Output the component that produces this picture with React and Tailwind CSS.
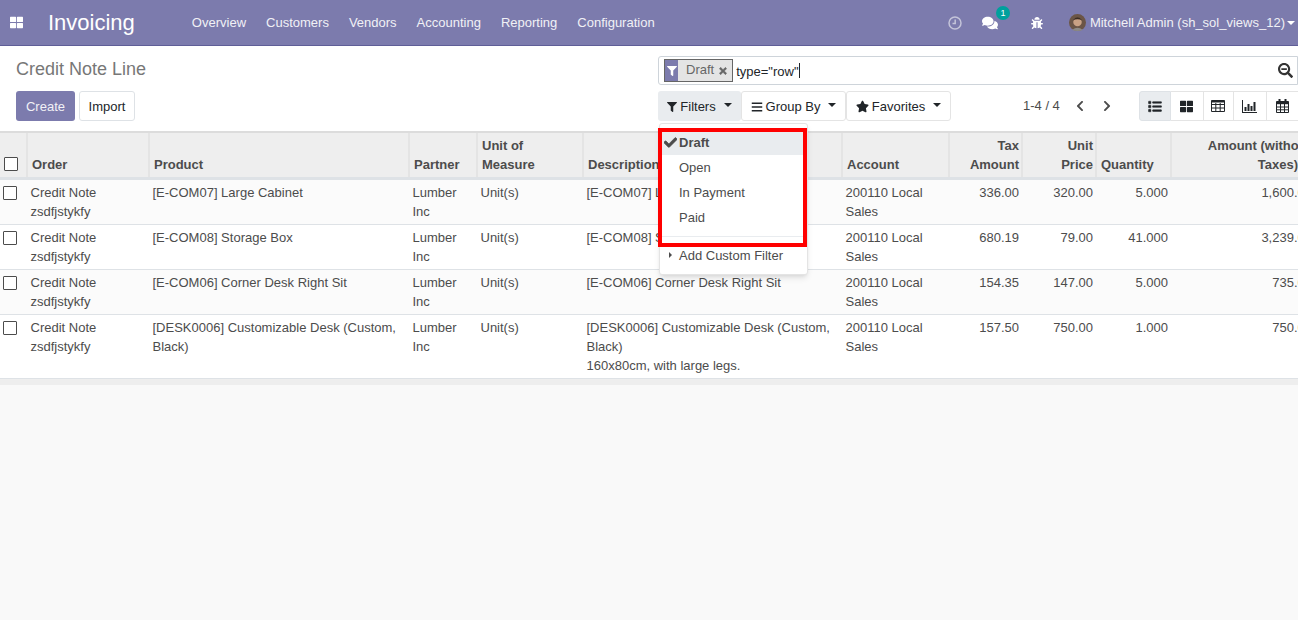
import React from 'react';
import { FaThLarge, FaComments, FaBug, FaFilter, FaTimes, FaSearchMinus, FaBars, FaStar, FaChevronLeft, FaChevronRight, FaList, FaCheck } from 'react-icons/fa';

const menus = ['Overview', 'Customers', 'Vendors', 'Accounting', 'Reporting', 'Configuration'];

const rows = [
  { order: 'Credit Note zsdfjstykfy', product: '[E-COM07] Large Cabinet', desc: ['[E-COM07] Large Cabinet'], tax: '336.00', price: '320.00', qty: '5.000', amount: '1,600.00' },
  { order: 'Credit Note zsdfjstykfy', product: '[E-COM08] Storage Box', desc: ['[E-COM08] Storage Box'], tax: '680.19', price: '79.00', qty: '41.000', amount: '3,239.00' },
  { order: 'Credit Note zsdfjstykfy', product: '[E-COM06] Corner Desk Right Sit', desc: ['[E-COM06] Corner Desk Right Sit'], tax: '154.35', price: '147.00', qty: '5.000', amount: '735.00' },
  { order: 'Credit Note zsdfjstykfy', product: '[DESK0006] Customizable Desk (Custom, Black)', desc: ['[DESK0006] Customizable Desk (Custom, Black)', '160x80cm, with large legs.'], tax: '157.50', price: '750.00', qty: '1.000', amount: '750.00' },
];

const Caret = () => (
  <span className="inline-block ml-2 mb-[3px] border-t-[4px] border-x-[4px] border-x-transparent border-t-[#212529] align-middle" />
);

const Check = () => (
  <span className="block w-[14px] h-[14px] border border-[#4c4c4c] rounded-[1px] bg-white" />
);

const Th = ({ right, children }) => (
  <th className={`pt-[3px] pb-[3px] align-bottom font-bold leading-[19px] text-[#4c4c4c] border-l-2 border-[#e4e4e4] ${right ? 'pl-1 pr-[2px] text-right' : 'px-1 text-left'}`}>
    {children}
  </th>
);

const Td = ({ right, children }) => (
  <td className={`pl-[3.5px] pr-[3px] py-[3px] align-top leading-[19px] ${right ? 'text-right' : 'text-left'}`}>{children}</td>
);

const ClockIcon = () => (
  <svg width="14" height="14" viewBox="0 0 14 14" fill="none" stroke="#c4c4d9" strokeWidth="1.5">
    <circle cx="7" cy="7" r="6" />
    <path d="M7.2 3.5V7.5H4.5" />
  </svg>
);

const TableIcon = () => (
  <svg width="14" height="12" viewBox="0 0 14 12" fill="none" stroke="#212529">
    <path d="M.5 .5H13.5V11.5H.5Z M.5 4.5H13.5 M.5 8H13.5 M4.8 3V11.5 M9.2 3V11.5" />
    <path d="M.5 1.5H13.5" strokeWidth="2" />
  </svg>
);

const ChartIcon = () => (
  <svg width="15" height="13" viewBox="0 0 15 13" fill="#212529">
    <path d="M0 0H1V12H15V13H0Z" />
    <path d="M2.5 7H4.5V11H2.5Z M5.5 4H7.5V11H5.5Z M8.5 6H10.5V11H8.5Z M11.5 2H13.5V11H11.5Z" />
  </svg>
);

const CalendarIcon = () => (
  <svg width="13" height="14" viewBox="0 0 13 14" fill="none" stroke="#212529">
    <path d="M.5 2.5H12.5V13.5H.5Z M.5 8H12.5 M.5 10.8H12.5 M4.5 5V13.5 M8.5 5V13.5" />
    <path d="M.5 4H12.5" strokeWidth="2.4" />
    <path d="M3.5 0V3 M9.5 0V3" strokeWidth="2" />
  </svg>
);

export default function App() {
  return (
    <div className="h-[620px] overflow-hidden bg-[#f9f9f9] text-[13px] text-[#4c4c4c] font-['Liberation_Sans',sans-serif]">
      {/* top bar */}
      <header className="h-[46px] bg-[#7c7bad] border-b border-[#5f5e97] flex items-center text-white">
        <FaThLarge className="ml-[10px] w-[13px] h-[13px]" />
        <span className="ml-[25px] text-[22px]">Invoicing</span>
        <nav className="ml-[57px] flex gap-5">
          {menus.map((m) => (
            <span key={m} className="text-[#f1f1f6]">{m}</span>
          ))}
        </nav>
        <div className="ml-auto flex items-center">
          <ClockIcon />
          <div className="relative ml-[20px]">
            <FaComments className="w-[16px] h-[16px]" />
            <span className="absolute -top-[9px] left-[14px] w-[14px] h-[14px] rounded-full bg-[#00a09d] text-[9px] leading-[14px] text-center">1</span>
          </div>
          <FaBug className="ml-[33px] w-[12px] h-[12px]" />
          <svg className="ml-[26px]" width="17" height="17" viewBox="0 0 16 16">
            <circle cx="8" cy="8" r="8" fill="#6b5546" />
            <circle cx="8" cy="7.5" r="4" fill="#c9a184" />
            <path d="M3.5 6 Q8 0 12.5 6 Q8 4 3.5 6Z" fill="#3a2c24" />
            <path d="M3 15 Q8 11 13 15 Q8 17 3 15Z" fill="#8d8a86" />
          </svg>
          <span className="ml-[4px] text-[#f1f1f6]">Mitchell Admin (sh_sol_views_12)</span>
          <span className="ml-[2px] mr-[3px] border-t-[4px] border-x-[4px] border-x-transparent border-t-white" />
        </div>
      </header>

      {/* control panel */}
      <div className="h-[85px] bg-white flex">
        <div className="flex-none w-[658px] pl-4 pt-[10px]">
          <h1 className="text-[18px] leading-[27px] text-[#777777]">Credit Note Line</h1>
          <div className="mt-[8px] flex gap-1">
            <button className="w-[59px] h-[30px] pt-px rounded-[3px] bg-[#7c7bad] text-[#f1f1f6]">Create</button>
            <button className="w-[56px] h-[30px] pt-px rounded-[3px] bg-white border border-[#dee2e6] text-[#212529]">Import</button>
          </div>
        </div>
        <div className="flex-1 min-w-0 pt-[10px]">
          <div className="h-[29px] pl-[5px] pr-[4px] border border-[#ced4da] rounded-l-[3px] flex items-center">
            <span className="h-[23px] flex items-stretch border border-[#666666] bg-[#e4e4e4]">
              <span className="w-[13px] flex-none bg-[#7c7bad] flex items-center justify-center">
                <FaFilter className="w-[10px] h-[10px] text-white" />
              </span>
              <span className="pl-[8px] pr-[4px] text-[#666666] leading-[19px]">Draft</span>
              <FaTimes className="self-center mr-[4px] w-[10px] h-[10px] text-[#666666] stroke-current stroke-[30]" />
            </span>
            <span className="ml-[3px] text-[#212529] leading-[23px] mt-[1px]">type="row"</span>
            <span className="w-px h-[15px] bg-[#212529]" />
            <FaSearchMinus className="ml-auto w-[15px] h-[15px] text-[#333333]" />
          </div>
          <div className="mt-[6px] flex items-center">
            <div className="relative">
              <button className="w-[83px] h-[30px] pt-px rounded-[3px] bg-[#e9ecef] text-[#212529] flex items-center justify-center">
                <FaFilter className="mr-[3px] w-[10px] h-[10px]" />Filters<Caret />
              </button>
              {/* filter menu */}
              <div className="absolute z-10 left-[1px] top-[32px] w-[149px] py-[6px] bg-white border border-[#e4e4e4] rounded-[3px] shadow-md">
                <div className="relative h-[25px] bg-[#e9ecef] pl-[19px] leading-[25px] font-bold">
                  <FaCheck className="absolute left-[4px] top-[6px] w-[13px] h-[13px] stroke-current stroke-[30]" />Draft
                </div>
                <div className="h-[25px] pl-[19px] leading-[25px]">Open</div>
                <div className="h-[25px] pl-[19px] leading-[25px]">In Payment</div>
                <div className="h-[25px] pl-[19px] leading-[25px]">Paid</div>
                <div className="my-[6px] h-px bg-[#e9ecef]" />
                <div className="relative h-[25px] pl-[19px] leading-[25px]">
                  <span className="absolute left-[9px] top-[9px] border-l-[3px] border-y-[3px] border-y-transparent border-l-[#4c4c4c]" />
                  Add Custom Filter
                </div>
                <div className="absolute -left-[2px] top-[4px] w-[149px] h-[119px] border-[4px] border-[#ff0000]" />
              </div>
            </div>
            <button className="flex-none w-[105px] h-[30px] pt-px rounded-[3px] bg-white border border-[#e4e4e4] text-[#212529] flex items-center justify-center">
              <FaBars className="mr-[3px] w-[12px] h-[12px]" />Group By<Caret />
            </button>
            <button className="flex-none w-[105px] h-[30px] pt-px rounded-[3px] bg-white border border-[#e4e4e4] text-[#212529] flex items-center justify-center">
              <FaStar className="mr-[3px] w-[13px] h-[13px]" />Favorites<Caret />
            </button>
            <span className="ml-[72px] whitespace-nowrap">1-4 / 4</span>
            <FaChevronLeft className="flex-none ml-[15px] w-[10px] h-[12px]" />
            <FaChevronRight className="flex-none ml-[17px] w-[10px] h-[12px]" />
            <div className="flex-none ml-[27px] flex h-[30px] text-[#212529]">
              <span className="w-[32px] bg-[#e9ecef] border border-[#dee2e6] rounded-l-[3px] flex items-center justify-center"><FaList className="w-[14px] h-[13px] stroke-current stroke-[20]" /></span>
              <span className="w-[33px] border-y border-r border-[#e4e4e4] flex items-center justify-center"><FaThLarge className="w-[13px] h-[13px]" /></span>
              <span className="w-[30px] border-y border-r border-[#e4e4e4] flex items-center justify-center"><TableIcon /></span>
              <span className="w-[33px] border-y border-r border-[#e4e4e4] flex items-center justify-center"><ChartIcon /></span>
              <span className="w-[31px] border-y border-[#e4e4e4] flex items-center justify-center"><CalendarIcon /></span>
            </div>
          </div>
        </div>
      </div>

      {/* list */}
      <div className="overflow-hidden bg-white border-t-2 border-[#dcdcdc]">
        <table className="table-fixed border-collapse w-[1315px]">
          <colgroup>
            <col className="w-[27px]" />
            <col className="w-[122px]" />
            <col className="w-[260px]" />
            <col className="w-[68px]" />
            <col className="w-[106px]" />
            <col className="w-[259px]" />
            <col className="w-[107px]" />
            <col className="w-[73px]" />
            <col className="w-[74px]" />
            <col className="w-[75px]" />
            <col className="w-[144px]" />
          </colgroup>
          <thead>
            <tr className="bg-[#eeeeee] border-b-[3px] border-[#dee2e6]">
              <th className="pl-1 pb-[6px] align-bottom"><Check /></th>
              <Th>Order</Th>
              <Th>Product</Th>
              <Th>Partner</Th>
              <Th>Unit of Measure</Th>
              <Th>Description</Th>
              <Th>Account</Th>
              <Th right>Tax Amount</Th>
              <Th right>Unit<br />Price</Th>
              <Th>Quantity</Th>
              <Th right>
                <span className="block mr-[2px] whitespace-nowrap">Amount (without</span>
                <span className="block mr-[15px]">Taxes)</span>
              </Th>
            </tr>
          </thead>
          <tbody>
            {rows.map((r, i) => (
              <tr key={i} className={`border-b border-[#dee2e6] ${i % 2 === 0 ? 'bg-[#fbfbfb]' : 'bg-white'}`}>
                <td className="pl-[3px] pt-[6px] align-top"><Check /></td>
                <Td>{r.order}</Td>
                <Td>{r.product}</Td>
                <Td>Lumber Inc</Td>
                <Td>Unit(s)</Td>
                <Td>{r.desc.map((d) => <div key={d}>{d}</div>)}</Td>
                <Td>200110 Local Sales</Td>
                <Td right>{r.tax}</Td>
                <Td right>{r.price}</Td>
                <Td right>{r.qty}</Td>
                <Td right>{r.amount}</Td>
              </tr>
            ))}
          </tbody>
        </table>
        <div className="h-[6px] bg-[#eeeeee]" />
      </div>
    </div>
  );
}
